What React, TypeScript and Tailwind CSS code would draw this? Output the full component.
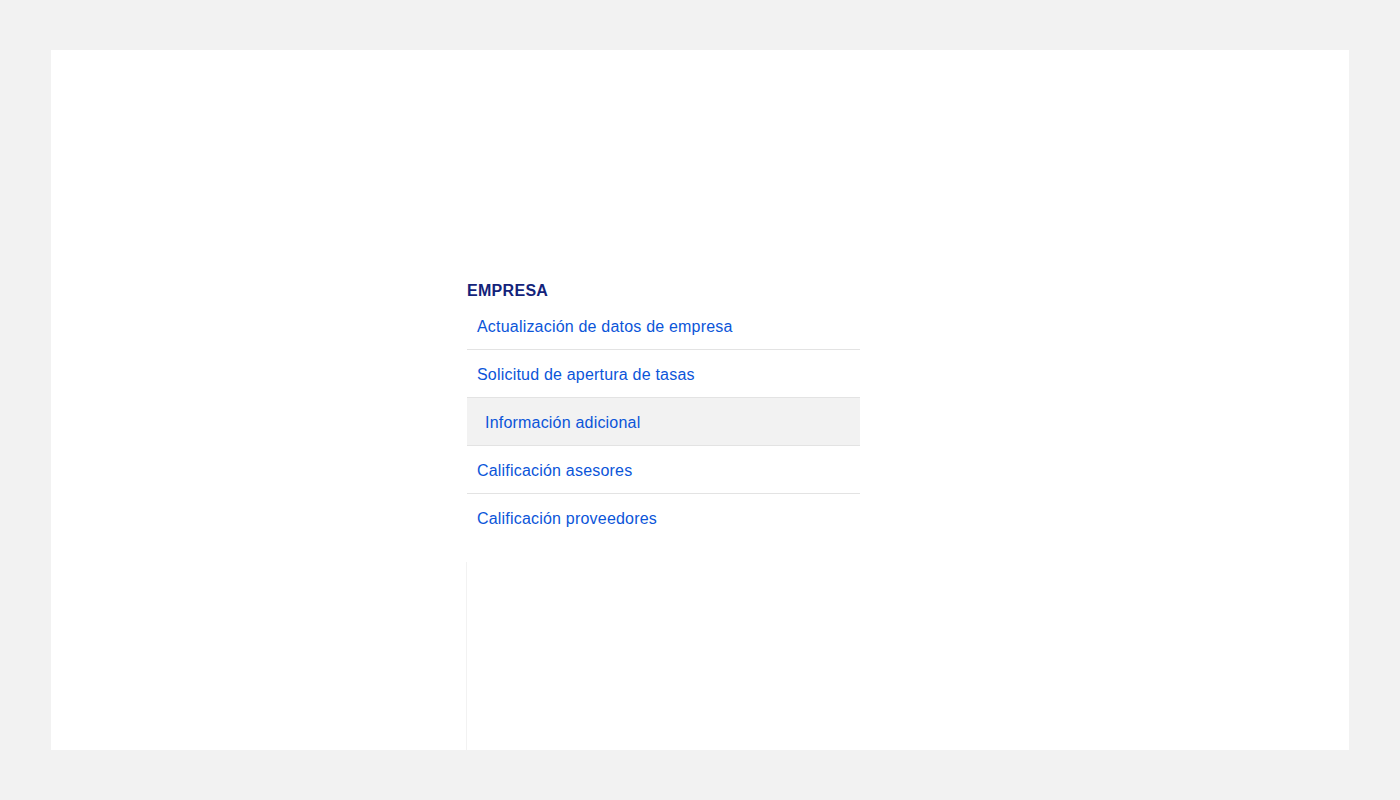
import React from "react";

const items = [
  { label: "Actualización de datos de empresa", active: false },
  { label: "Solicitud de apertura de tasas", active: false },
  { label: "Información adicional", active: true },
  { label: "Calificación asesores", active: false },
  { label: "Calificación proveedores", active: false },
];

export default function App() {
  return (
    <div className="min-h-[800px] bg-[#f2f2f2] px-[51px] py-[50px]" style={{ fontFamily: '"Liberation Sans", Arial, sans-serif' }}>
      <div className="h-[700px] bg-white pl-[416px] pt-[230px] flex flex-col">
        <div className="w-[393px]">
          <div className="h-[22px] pt-[1px] text-[16px] leading-[20px] font-bold tracking-[0.3px] text-[#13237a]">EMPRESA</div>
          <ul>
            {items.map((it, i) => (
              <li
                key={it.label}
                className={
                  "h-[48px] flex items-center pt-[2px] text-[16px] tracking-[0.2px] text-[#0b55d9] " +
                  (i < items.length - 1 ? "border-b border-[#e3e3e3] " : "") +
                  (it.active ? "bg-[#f2f2f2] pl-[18px]" : "pl-[10px]")
                }
              >
                {it.label}
              </li>
            ))}
          </ul>
        </div>
        <div className="mt-[20px] flex-1 w-px bg-[#f2f2f2] -ml-px" />
      </div>
    </div>
  );
}
